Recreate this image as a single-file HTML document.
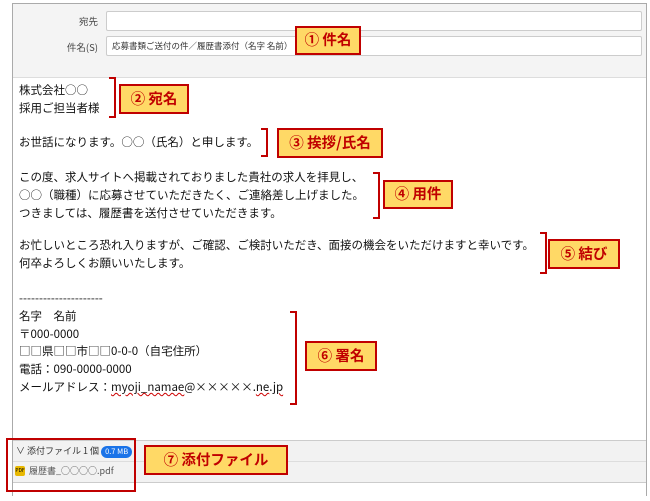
<!DOCTYPE html><html><head><meta charset="utf-8"><style>
body{margin:0;width:650px;height:501px;background:#fff;position:relative;font-family:"Noto Sans CJK JP","Liberation Sans",sans-serif;overflow:hidden}
.a{position:absolute}
.frame{left:12px;top:3px;width:635px;height:493px;border:1px solid #aaa;box-sizing:border-box}
.hdr{left:13px;top:4px;width:633px;height:73px;background:#f4f4f4;border-bottom:1px solid #ddd}
.in{background:#fff;border:1px solid #ccc;border-radius:2px;height:20px;left:106px;width:536px;font-size:8.5px;line-height:18px;padding-left:5px;box-sizing:border-box;color:#333;white-space:nowrap}
.lb{font-size:9.5px;color:#444;right:552px;text-align:right;line-height:14px}
.t{font-size:11.5px;color:#111;left:19px;line-height:17.8px;white-space:nowrap}
.tag{background:#ffd966;border:2px solid #c00000;color:#c00000;font-weight:bold;font-size:14.5px;text-align:center;box-sizing:border-box;white-space:nowrap}
.br{border:2px solid #c00000;border-left:none;width:7px;box-sizing:border-box}
</style></head><body>
<div class="a frame"></div>
<div class="a hdr"></div>
<div class="a lb" style="top:14px">宛先</div>
<div class="a in" style="top:11px"></div>
<div class="a lb" style="top:40px">件名(S)</div>
<div class="a in" style="top:36px">応募書類ご送付の件／履歴書添付（名字 名前）</div>
<div class="a tag" style="left:295px;top:26px;width:66px;height:29px;line-height:24px">① 件名</div>

<div class="a t" style="top:82px">株式会社○○<br>採用ご担当者様</div>
<div class="a br" style="left:109px;top:77px;height:41px"></div>
<div class="a tag" style="left:119px;top:84px;width:70px;height:30px;line-height:25px">② 宛名</div>

<div class="a t" style="top:134px">お世話になります。○○（氏名）と申します。</div>
<div class="a br" style="left:261px;top:128px;height:29px"></div>
<div class="a tag" style="left:277px;top:128px;width:106px;height:30px;line-height:25px">③ 挨拶/氏名</div>

<div class="a t" style="top:169px">この度、求人サイトへ掲載されておりました貴社の求人を拝見し、<br>○○（職種）に応募させていただきたく、ご連絡差し上げました。<br>つきましては、履歴書を送付させていただきます。</div>
<div class="a br" style="left:373px;top:172px;height:47px"></div>
<div class="a tag" style="left:383px;top:180px;width:70px;height:29px;line-height:24px">④ 用件</div>

<div class="a t" style="top:237px">お忙しいところ恐れ入りますが、ご確認、ご検討いただき、面接の機会をいただけますと幸いです。<br>何卒よろしくお願いいたします。</div>
<div class="a br" style="left:540px;top:232px;height:42px"></div>
<div class="a tag" style="left:548px;top:239px;width:72px;height:30px;line-height:25px">⑤ 結び</div>

<div class="a t" style="top:290px">---------------------<br>名字　名前<br>〒000-0000<br>□□県□□市□□0-0-0（自宅住所）<br>電話：090-0000-0000<br>メールアドレス：<span style="text-decoration:underline wavy #c00;text-decoration-thickness:1px">myoji_namae</span>@×××××.<span style="text-decoration:underline wavy #c00;text-decoration-thickness:1px">ne</span>.<span style="text-decoration:underline wavy #c00;text-decoration-thickness:1px">jp</span></div>
<div class="a br" style="left:290px;top:311px;height:94px"></div>
<div class="a tag" style="left:305px;top:341px;width:72px;height:30px;line-height:25px">⑥ 署名</div>

<div class="a" style="left:13px;top:440px;width:633px;height:56px;background:#f2f2f2"></div>
<div class="a" style="left:13px;top:440px;width:633px;border-top:1px solid #ccc"></div>
<div class="a" style="left:13px;top:461px;width:633px;border-top:1px solid #ddd"></div>
<div class="a" style="left:13px;top:482px;width:633px;border-top:1px solid #ccc;height:13px;background:#fff"></div>
<div class="a" style="left:16px;top:444px;font-size:9px;color:#333;white-space:nowrap;line-height:13px">∨ 添付ファイル 1 個 <span style="display:inline-block;background:#1a73e8;color:#fff;border-radius:7px;padding:0 4px;font-size:7.5px;line-height:12px">0.7 MB</span></div>
<div class="a" style="left:15px;top:466px;width:10px;height:10px;background:#e8b800;border-radius:2px;font-size:5px;color:#000;text-align:center;line-height:10px">PDF</div>
<div class="a" style="left:29px;top:464px;font-size:9px;color:#555;line-height:13px">履歴書_○○○○.pdf</div>
<div class="a" style="left:6px;top:438px;width:130px;height:54px;border:2px solid #c00000;box-sizing:border-box"></div>
<div class="a tag" style="left:144px;top:445px;width:144px;height:30px;line-height:25px">⑦ 添付ファイル</div>
</body></html>
